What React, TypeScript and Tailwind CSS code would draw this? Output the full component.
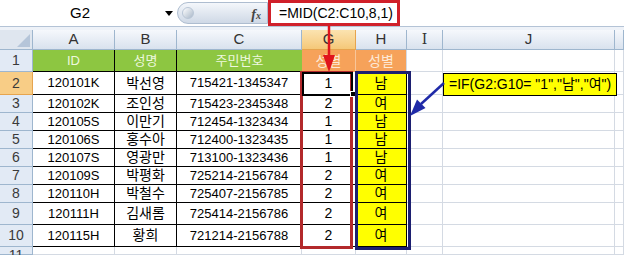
import React from "react";

const rows: [string, string, string, string, string][] = [
  ["120101K", "박선영", "715421-1345347", "1", "남"],
  ["120102K", "조인성", "715423-2345348", "2", "여"],
  ["120105S", "이만기", "712454-1323434", "1", "남"],
  ["120106S", "홍수아", "712400-1323435", "1", "남"],
  ["120107S", "영광만", "713100-1323436", "1", "남"],
  ["120109S", "박평화", "725214-2156784", "2", "여"],
  ["120110H", "박철수", "725407-2156785", "2", "여"],
  ["120111H", "김새롬", "725414-2156786", "2", "여"],
  ["120115H", "황희", "721214-2156788", "2", "여"],
];

const colHead = "flex items-center justify-center border-r border-b border-[#9eb6ce] bg-gradient-to-b from-[#f5f8fc] to-[#d9e2ee] text-[15px] text-[#333]";
const rowHead = "flex items-center justify-center border-r border-b border-[#9eb6ce] bg-[#e2eaf5] text-[14px] text-[#3a3a3a]";
const empty = "border-r border-b border-[#d4dae3] bg-white";
const dataCell = "flex items-center justify-center border-r border-b border-black bg-white text-[13px] text-black";

export default function App() {
  return (
    <div
      className="relative w-[624px] h-[255px] overflow-hidden bg-white"
      style={{ fontFamily: '"Liberation Sans", "Noto Sans CJK KR", sans-serif' }}
    >
      {/* Formula bar */}
      <div className="flex h-[27px] border-b border-[#b4c3d6] bg-white">
        <div className="flex w-[177px] items-center">
          <div className="flex w-[160px] items-center justify-center text-[15px] text-black">G2</div>
          <div className="ml-[5px] h-0 w-0 border-l-[4px] border-r-[4px] border-t-[5px] border-l-transparent border-r-transparent border-t-black" />
        </div>
        <div className="relative mt-[2px] h-[22px] w-[91px] rounded-l-full border border-[#aebdd0] bg-gradient-to-b from-[#f4f7fb] to-[#cfd9e6]">
          <div className="absolute left-[4px] top-[4px] h-[12px] w-[12px] rounded-full bg-gradient-to-br from-[#ffffff] to-[#aab8c9] border border-[#b9c6d6]" />
          <span
            className="absolute right-[6px] top-[1px] text-[14px] italic font-bold text-[#444]"
            style={{ fontFamily: '"Liberation Serif", serif' }}
          >
            f<span className="text-[10px]">x</span>
          </span>
        </div>
        <div className="flex h-[26px] w-[132px] items-center whitespace-nowrap border-[3px] border-[#d0202a] pl-[8px] text-[14px] text-black">
          =MID(C2:C10,8,1)
        </div>
        <div className="flex-1" />
      </div>
      <div className="h-[3px] bg-[#eef2f8]" />

      {/* Grid */}
      <div className="grid grid-cols-[33px_82px_62px_125px_54px_51px_36px_172px_9px] grid-rows-[20px_22px_23px_18px_18px_18px_18px_18px_18px_22px_22px_8px]">
        {/* header row */}
        <div className="relative border-r border-b border-[#9eb6ce] bg-[#dfe6ef]">
          <svg className="absolute right-[2px] bottom-[2px]" width="13" height="13">
            <polygon points="13,0 13,13 0,13" fill="#b5c5d9" />
          </svg>
        </div>
        <div className={colHead}>A</div>
        <div className={colHead}>B</div>
        <div className={colHead}>C</div>
        <div className="flex items-center justify-center border-r border-b border-[#e6a44e] bg-gradient-to-b from-[#fbe3b0] to-[#f5c878] text-[15px] text-[#333]">G</div>
        <div className={colHead}>H</div>
        <div className={colHead} style={{ fontFamily: '"DejaVu Serif", serif', fontSize: 14 }}>I</div>
        <div className={colHead}>J</div>
        <div className={colHead} />

        {/* row 1 */}
        <div className={rowHead}>1</div>
        <div className="flex items-center justify-center border-r border-b border-black bg-[#8dc641] text-[13px] text-[#eef8df]">ID</div>
        <div className="flex items-center justify-center border-r border-b border-black bg-[#8dc641] text-[13px] text-[#eef8df]">성명</div>
        <div className="flex items-center justify-center border-b border-black bg-[#8dc641] text-[13px] text-[#eef8df]">주민번호</div>
        <div className="flex items-center justify-center border-r border-[#f8c69a] bg-[#f6a25a] text-[14px] text-[#fde9d6]">성별</div>
        <div className="flex items-center justify-center border-r border-[#d4dae3] bg-[#f6a25a] text-[14px] text-[#fde9d6]">성별</div>
        <div className={empty} />
        <div className={empty} />
        <div className={empty} />

        {rows.map((r, i) => (
          <React.Fragment key={i}>
            <div className={i === 0 ? "flex items-center justify-center border-r border-b border-[#e6a44e] bg-[#f8cd86] text-[14px] text-[#3a3a3a]" : rowHead}>
              {i + 2}
            </div>
            <div className={dataCell}>{r[0]}</div>
            <div className={dataCell + " text-[14px]"}>{r[1]}</div>
            <div className={dataCell}>{r[2]}</div>
            <div className="flex items-center justify-center border-r border-b border-black bg-white text-[14px] text-black">{r[3]}</div>
            <div className="flex items-center justify-center border-r border-b border-black bg-[#ffff00] text-[14px] text-black">{r[4]}</div>
            <div className={empty} />
            <div className={empty} />
            <div className={empty} />
          </React.Fragment>
        ))}

        {/* row 11 */}
        <div className={rowHead + " items-start"}>
          <span className="mt-[-2px] text-[14px]">11</span>
        </div>
        <div className={empty} />
        <div className={empty} />
        <div className={empty} />
        <div className={empty} />
        <div className={empty} />
        <div className={empty} />
        <div className={empty} />
        <div className={empty} />
      </div>

      {/* Annotation boxes */}
      <div className="absolute left-[300px] top-[71px] h-[178px] w-[53px] border-[3px] border-[#b3292b]" />
      <div className="absolute left-[302px] top-[72px] h-[24px] w-[51px] border-2 border-black" />
      <div className="absolute left-[350px] top-[91px] h-[6px] w-[6px] border border-white bg-black" />
      <div className="absolute left-[355px] top-[71px] h-[179px] w-[56px] border-[3px] border-[#1c1f70]" />

      {/* Callout */}
      <div className="absolute left-[443px] top-[73px] flex h-[23px] w-[174px] items-center whitespace-nowrap border border-black bg-[#ffff00] pl-[5px] text-[14px] text-black">
        =IF(G2:G10= "1","남","여")
      </div>

      {/* Arrows */}
      <svg className="pointer-events-none absolute left-0 top-0" width="624" height="255">
        <line x1="329" y1="26" x2="329" y2="58" stroke="#e0141c" strokeWidth="2.5" />
        <polygon points="323,55 335,55 329,72" fill="#e0141c" />
        <line x1="444" y1="83" x2="421" y2="104" stroke="#1f2aa8" strokeWidth="2.5" />
        <polygon points="410,116 425.5,108 417,99.5" fill="#1f2aa8" />
      </svg>
    </div>
  );
}
